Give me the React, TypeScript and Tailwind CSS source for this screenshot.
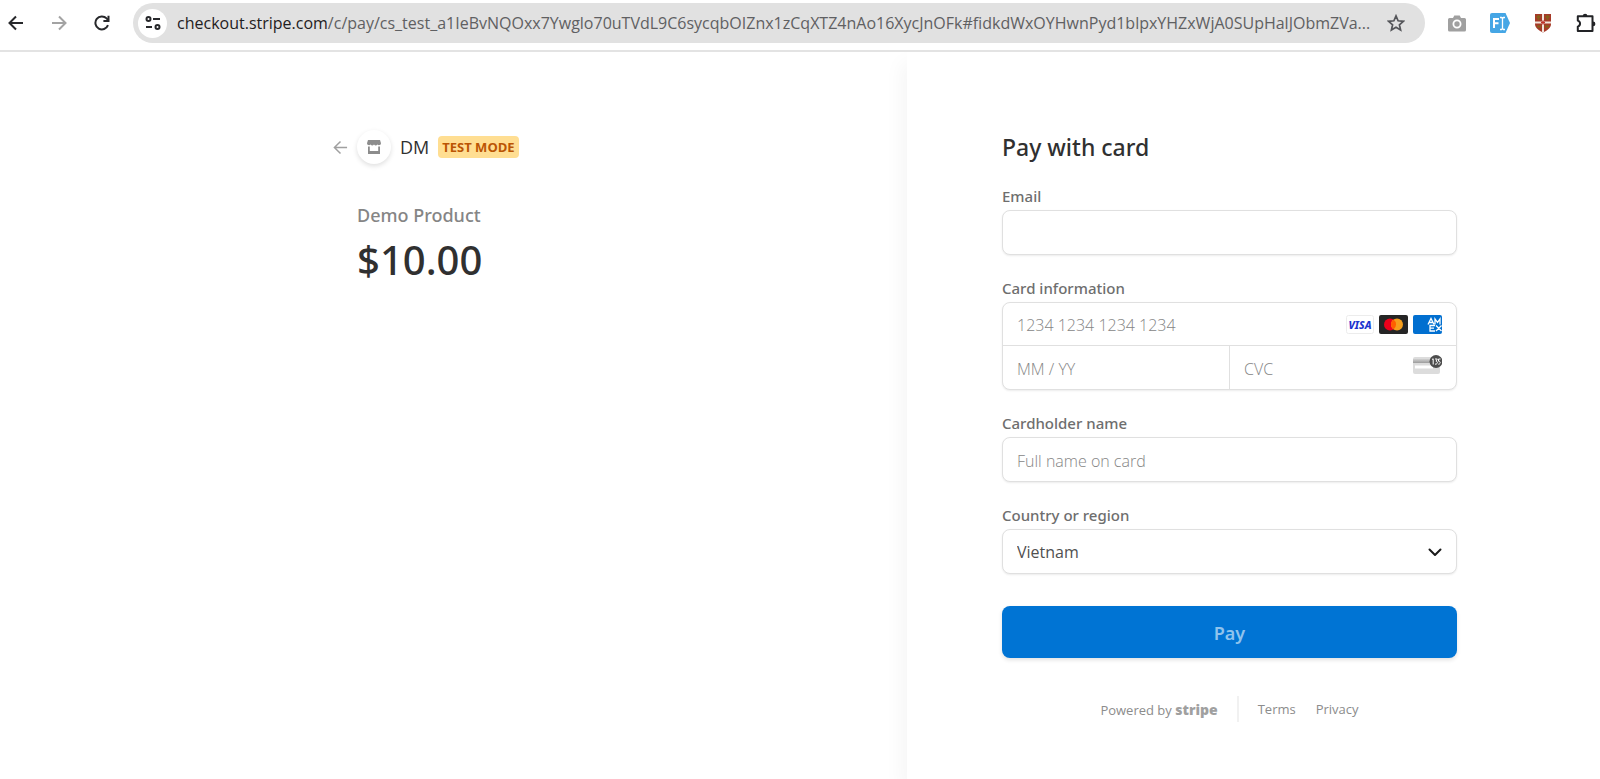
import React from "react"

const fontStack = "font-['Open_Sans','Noto_Sans',sans-serif]"
// Open Sans has no medium cut, so medium text goes to Noto Sans
const mediumFont = "font-['Noto_Sans','Open_Sans',sans-serif] font-medium"

const NavIcon = ({ children, label, className }: { children: React.ReactNode, label: string, className?: string }) => {
  return (
    <button type="button" aria-label={label} className={`flex size-5 shrink-0 items-center justify-center ${className ?? ``}`}>
      {children}
    </button>
  )
}

const ArrowIcon = ({ size, width, flip }: { size: number, width: number, flip?: boolean }) => (
  <svg width={size} height={size} viewBox="0 0 16 16" fill="none" stroke="currentColor" strokeWidth={width}>
    {flip ? <path d="M1 8h13M8 1.5 14.5 8 8 14.5" /> : <path d="M15 8H2M8 1.5 1.5 8 8 14.5" />}
  </svg>
)

const BrowserBar = () => {
  return (
    <header className="flex h-[52px] items-start border-b-2 border-[#e3e3e3] bg-white pl-1.5 pr-1">
      <div className="flex h-[46px] shrink-0 items-center gap-[23px] pr-[21px] text-[#27282b]">
        <NavIcon label="Back">
          <ArrowIcon size={16} width={2} />
        </NavIcon>
        <NavIcon label="Forward" className="text-[#a3a3a3]">
          <ArrowIcon size={16} width={2} flip />
        </NavIcon>
        <NavIcon label="Reload">
          <svg width="16" height="16" viewBox="0 0 16 16" fill="none" stroke="currentColor" strokeWidth="2">
            <path d="M14 10.200A6.500 6.500 0 1 1 12.600 3.400L14.500 5.500" />
            <path d="M14.500 0.800v5.200H9.400" />
          </svg>
        </NavIcon>
      </div>
      {/* Address bar */}
      <div className="mt-[3px] flex h-10 min-w-0 grow items-center rounded-full bg-[#e1e1e1] pl-[5px] pr-5">
        <button type="button" aria-label="Site information" className="flex size-[29px] shrink-0 items-center justify-center rounded-full bg-white text-[#27282b]">
          <svg width="16" height="14" viewBox="0 0 16 14" fill="none" stroke="currentColor" strokeWidth="2">
            <circle cx="3.5" cy="3" r="2" />
            <path d="M8 3h7M1 11h6" />
            <circle cx="12.500" cy="11" r="2" />
          </svg>
        </button>
        <p className="ml-2.5 grow truncate text-base text-[#5f6062]">
          <span className="text-[#1f2022]">checkout.stripe.com</span>/c/pay/cs_test_a1IeBvNQOxx7Ywglo70uTVdL9C6sycqbOIZnx1zCqXTZ4nAo16XycJnOFk#fidkdWxOYHwnPyd1blpxYHZxWjA0SUpHalJObmZVa...
        </p>
        <button type="button" aria-label="Bookmark this page" className="shrink-0 text-[#55565a]">
          <svg width="18" height="18" viewBox="0 0 18 18" fill="none" stroke="currentColor" strokeWidth="1.7">
            <path d="M9 1.900l2.100 4.900 5.300.5-4 3.500 1.200 5.200L9 13.200 4.400 16l1.200-5.200-4-3.500 5.300-.5z" />
          </svg>
        </button>
      </div>
      <div className="flex h-[46px] shrink-0 items-center gap-[23px] pl-[22px]">
        <NavIcon label="Screenshot" className="text-[#a0a0a0]">
          <svg width="18" height="17" viewBox="0 0 18 17">
            <path fill="currentColor" d="M1.500 3H5l1.300-2.500h5.400L13 3h3.500a1.500 1.500 0 0 1 1.500 1.500v10.500a1.500 1.500 0 0 1-1.500 1.500h-15A1.500 1.500 0 0 1 0 15V4.500A1.500 1.500 0 0 1 1.500 3z" />
            <circle cx="9" cy="9" r="3.600" fill="none" stroke="#fff" strokeWidth="1.800" />
          </svg>
        </NavIcon>
        <NavIcon label="Font identifier">
          <svg width="20" height="20" viewBox="0 0 20 20">
            <path fill="#45a6e5" d="M2 0h13.500L20 10l-4.500 10H2a2 2 0 0 1-2-2V2a2 2 0 0 1 2-2z" />
            <path d="M4 15V6h5M4 10.200h4.500" fill="none" stroke="#fff" strokeWidth="2" />
            <path d="M10 4.500h1.500l1 1 1-1H15M12.500 5.500v10M10 16.500h1.500l1-1 1 1H15" fill="none" stroke="#fff" strokeWidth="1.300" />
          </svg>
        </NavIcon>
        <NavIcon label="Shield">
          <svg width="18" height="20" viewBox="0 0 18 20">
            <path fill="#a63a28" d="M1 1h16v10c0 4-4 6.500-8 8.500C5 17.500 1 15 1 11z" />
            <path d="M9 1v18M1 9.500h16" stroke="#f1e4dc" strokeWidth="2" />
            <path d="M2.500 4h4M11.500 4h4M4.500 2v5M13.500 2v5M3 13.500h4M11 13.500h4" stroke="#86601a" strokeWidth="1.800" />
            <path d="M9 7.500v4M7 9.500h4" stroke="#c03028" strokeWidth="1.400" />
          </svg>
        </NavIcon>
        <NavIcon label="Extensions" className="text-[#222326]">
          <svg width="20" height="20" viewBox="0 0 20 20">
            <path d="M1.800 3.300h14.700v14.700H1.800v-4.400c3-.8 3-5.200 0-6z" fill="none" stroke="currentColor" strokeWidth="2" strokeLinejoin="round" />
            <path fill="currentColor" d="M6.800 3a2.300 2.300 0 0 1 4.600 0zM17 8.500a2.400 2.400 0 0 1 0 4.800z" />
          </svg>
        </NavIcon>
      </div>
    </header>
  )
}

const OrderSummary = () => {
  return (
    <section className="flex justify-end bg-white pr-[95px] pt-[78px]">
      <div className="w-full max-w-[455px]">
        <div className="-ml-6 flex h-[34px] items-center">
          <a href="#" aria-label="Back" className="w-6 text-[#a0a0a0]">
            <ArrowIcon size={15} width={1.6} />
          </a>
          <span className="flex size-[34px] items-center justify-center rounded-full bg-white shadow-[0_2px_5px_rgba(0,0,0,0.13)]">
            <svg width="14" height="14" viewBox="0 0 14 14" fill="#8c8c8c">
              <path d="M1 0h12l1 3.200a2 2 0 0 1-3.500 1.300 2.300 2.300 0 0 1-3.500 0 2.300 2.300 0 0 1-3.500 0A2 2 0 0 1 0 3.200z" />
              <path d="M1 6.500h1.800V11h8.400V6.500H13V14H1z" />
            </svg>
          </span>
          <span className="ml-[9px] text-lg text-[#303030]">DM</span>
          <span className="ml-[9px] flex h-[22px] items-center rounded bg-[#ffde92] px-1 pt-0.5 text-[13px] font-bold text-[#bb5504]">TEST MODE</span>
        </div>
        <h1 className={`mt-[37px] text-lg leading-7 text-[#858585] ${mediumFont}`}>Demo Product</h1>
        <p className={`mt-1.5 text-[40px] leading-[50px] text-[#303030] ${mediumFont}`}>$10.00</p>
      </div>
    </section>
  )
}

const Field = ({ id, label, children }: { id: string, label: string, children: React.ReactNode }) => (
  <div className="mt-[23px] first-of-type:mt-[22px]">
    <label htmlFor={id} className={`mb-1 block text-[15px] leading-5 text-[#6e6e6e] ${mediumFont}`}>{label}</label>
    {children}
  </div>
)

const boxStyle = "rounded-lg border border-[#e0e0e0] bg-white shadow-[0_1px_2px_rgba(0,0,0,0.08)]"
const inputStyle = "w-full min-w-0 bg-transparent px-3.5 pt-0.5 text-base font-light text-[#404040] outline-none placeholder:text-[#858585]"

const CardBrands = () => (
  <div className="flex shrink-0 gap-[5px] pr-3.5">
    <svg width="28" height="19" viewBox="0 0 28 19" aria-label="Visa">
      <rect x="0.5" y="0.5" width="27" height="18" rx="2" fill="#fff" stroke="#ececec" />
      <text x="14" y="13.500" textAnchor="middle" fill="#1c34cf" fontFamily="Noto Sans" fontSize="10.500" fontWeight="800" fontStyle="italic">VISA</text>
    </svg>
    <svg width="29" height="19" viewBox="0 0 29 19" aria-label="Mastercard">
      <rect width="29" height="19" rx="2" fill="#252525" />
      <circle cx="11" cy="9.500" r="6" fill="#eb001b" />
      <circle cx="18" cy="9.500" r="6" fill="#f79e1b" />
      <path d="M14.500 4.600a6 6 0 0 1 0 9.800 6 6 0 0 1 0-9.800z" fill="#ff5f00" />
    </svg>
    <svg width="29" height="19" viewBox="0 0 29 19" aria-label="American Express">
      <rect width="29" height="19" rx="2" fill="#016fd0" />
      <g fill="none" stroke="#fff" strokeWidth="1.300">
        <path d="M15 9.500 18 3.500 21 9.500M16.300 7.500h3.400M22 9.500V4l2.500 3.500L27 4v5.500" />
        <path d="M22 10.500h-5v5.500h5M17 13.200h4M23 10.500l5.500 5.500M28.500 10.500 23 16" />
      </g>
    </svg>
  </div>
)

const CvcIcon = () => (
  <svg width="29" height="20" viewBox="0 0 29 20" className="mb-1.5 mr-3.5 shrink-0">
    <defs>
      <linearGradient id="stripeFade" x1="0" y1="0" x2="0" y2="1">
        <stop offset="0" stopColor="#d0d0d0" />
        <stop offset="1" stopColor="#9c9c9c" />
      </linearGradient>
    </defs>
    <rect y="2" width="27" height="17" rx="2" fill="#dcdcdc" />
    <path d="M0 4h27v4H0z" fill="url(#stripeFade)" />
    <path d="M2 10.500h18v3H2z" fill="#fff" />
    <circle cx="23" cy="6.500" r="6.500" fill="#4d4d4d" />
    <path d="M19 4.500l1.200-.7v5.700M22 4h2.300L23 6.200c2 0 2 3.300-1 3M27.500 4h-2v2.200c2.300-.3 2.300 3.200-.2 3" fill="none" stroke="#fff" strokeWidth="1" />
  </svg>
)

const PaymentForm = () => {
  return (
    <section className="bg-white pl-[95px] pr-8 pt-[78px] shadow-[-6px_10px_18px_rgba(0,0,0,0.04)]">
      <form className="w-full max-w-[455px]">
        <h2 className={`text-[23px] leading-[34px] text-[#303030] ${mediumFont}`}>Pay with card</h2>
        <Field id="email" label="Email">
          <div className={`flex h-[45px] ${boxStyle}`}>
            <input id="email" type="email" className={inputStyle} />
          </div>
        </Field>
        <Field id="number" label="Card information">
          <div className={`h-[88px] ${boxStyle}`}>
            <div className="flex h-[43px] items-center border-b border-[#e0e0e0]">
              <input id="number" type="text" placeholder="1234 1234 1234 1234" className={inputStyle} />
              <CardBrands />
            </div>
            <div className="flex h-[43px]">
              <div className="flex flex-1 border-r border-[#e0e0e0]">
                <input type="text" aria-label="Expiration" placeholder="MM / YY" className={inputStyle} />
              </div>
              <div className="flex flex-1 items-center">
                <input type="text" aria-label="CVC" placeholder="CVC" className={inputStyle} />
                <CvcIcon />
              </div>
            </div>
          </div>
        </Field>
        <Field id="name" label="Cardholder name">
          <div className={`flex h-[45px] ${boxStyle}`}>
            <input id="name" type="text" placeholder="Full name on card" className={inputStyle} />
          </div>
        </Field>
        <Field id="country" label="Country or region">
          <div className={`relative flex h-[45px] ${boxStyle}`}>
            <select id="country" defaultValue="VN" className="w-full appearance-none bg-transparent px-3.5 text-base text-[#505050] outline-none">
              <option value="VN">Vietnam</option>
            </select>
            <svg width="14" height="9" viewBox="0 0 14 9" fill="none" stroke="#1a1a1a" strokeWidth="2" strokeLinecap="round" strokeLinejoin="round" className="pointer-events-none absolute right-3.5 top-[18px]">
              <path d="M1.500 1.500 7 7l5.500-5.500" />
            </svg>
          </div>
        </Field>
        <button type="submit" className="mt-8 h-[52px] w-full rounded-lg bg-[#0074d4] pt-0.5 font-['Noto_Sans','Open_Sans',sans-serif] text-lg font-semibold text-[#8fc3ed] shadow-[0_2px_4px_rgba(0,0,0,0.12)]">
          Pay
        </button>
        <footer className="mt-[38px] flex items-center justify-center text-[13px] text-[#8c8c8c]">
          <span className="pt-0.5">Powered by <b className="text-sm font-extrabold text-[#a0a0a0]">stripe</b></span>
          <span className="ml-[19px] h-[26px] border-l-2 border-[#f1f1f1]"></span>
          <a href="#" className="ml-[19px] pt-0.5">Terms</a>
          <a href="#" className="ml-5 pt-0.5">Privacy</a>
        </footer>
      </form>
    </section>
  )
}

const App = () => {
  return (
    <div className={`flex min-h-screen flex-col overflow-hidden bg-white ${fontStack}`}>
      <BrowserBar />
      <main className="grid grow grid-cols-[907fr_693fr] overflow-hidden">
        <OrderSummary />
        <PaymentForm />
      </main>
    </div>
  )
}

export default App
